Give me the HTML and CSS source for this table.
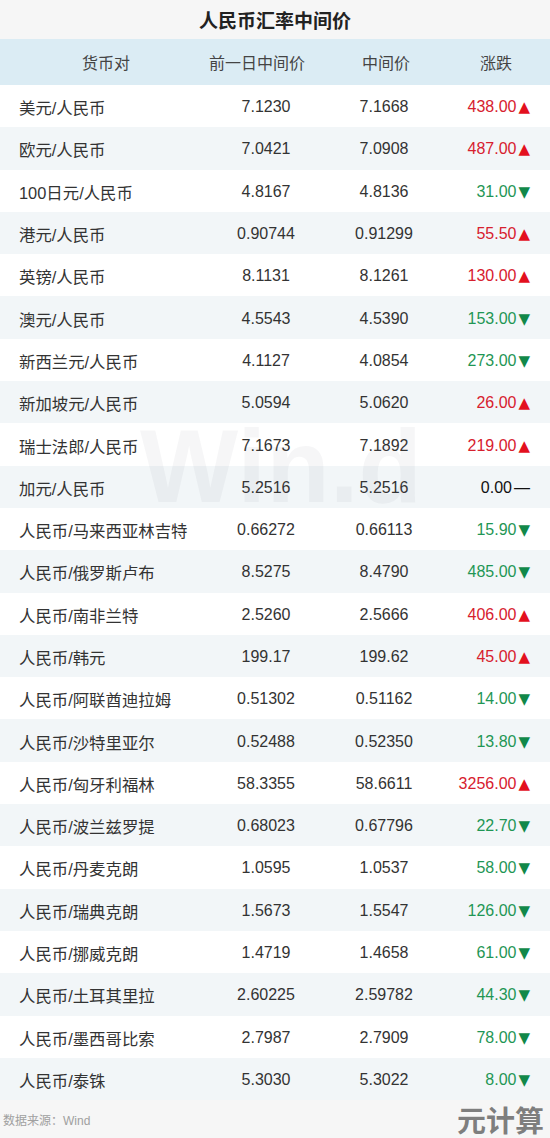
FILE: index.html
```html
<!DOCTYPE html>
<html lang="zh">
<head>
<meta charset="utf-8">
<title>人民币汇率中间价</title>
<link rel="stylesheet" href="styles.css">
</head>
<body>
<div class="page">
  <div class="title">人民币汇率中间价</div>
  <div class="head">
    <div class="hc">货币对</div>
    <div class="hc">前一日中间价</div>
    <div class="hc">中间价</div>
    <div class="hc">涨跌</div>
  </div>
  <div class="rows">
    <div class="row"><div class="c1">美元/人民币</div><div class="c2">7.1230</div><div class="c3">7.1668</div><div class="c4 up">438.00<span class="tri">▲</span></div></div>
    <div class="row"><div class="c1">欧元/人民币</div><div class="c2">7.0421</div><div class="c3">7.0908</div><div class="c4 up">487.00<span class="tri">▲</span></div></div>
    <div class="row"><div class="c1">100日元/人民币</div><div class="c2">4.8167</div><div class="c3">4.8136</div><div class="c4 down">31.00<span class="tri">▼</span></div></div>
    <div class="row"><div class="c1">港元/人民币</div><div class="c2">0.90744</div><div class="c3">0.91299</div><div class="c4 up">55.50<span class="tri">▲</span></div></div>
    <div class="row"><div class="c1">英镑/人民币</div><div class="c2">8.1131</div><div class="c3">8.1261</div><div class="c4 up">130.00<span class="tri">▲</span></div></div>
    <div class="row"><div class="c1">澳元/人民币</div><div class="c2">4.5543</div><div class="c3">4.5390</div><div class="c4 down">153.00<span class="tri">▼</span></div></div>
    <div class="row"><div class="c1">新西兰元/人民币</div><div class="c2">4.1127</div><div class="c3">4.0854</div><div class="c4 down">273.00<span class="tri">▼</span></div></div>
    <div class="row"><div class="c1">新加坡元/人民币</div><div class="c2">5.0594</div><div class="c3">5.0620</div><div class="c4 up">26.00<span class="tri">▲</span></div></div>
    <div class="row"><div class="c1">瑞士法郎/人民币</div><div class="c2">7.1673</div><div class="c3">7.1892</div><div class="c4 up">219.00<span class="tri">▲</span></div></div>
    <div class="row"><div class="c1">加元/人民币</div><div class="c2">5.2516</div><div class="c3">5.2516</div><div class="c4 flat">0.00<span class="dash">—</span></div></div>
    <div class="row"><div class="c1">人民币/马来西亚林吉特</div><div class="c2">0.66272</div><div class="c3">0.66113</div><div class="c4 down">15.90<span class="tri">▼</span></div></div>
    <div class="row"><div class="c1">人民币/俄罗斯卢布</div><div class="c2">8.5275</div><div class="c3">8.4790</div><div class="c4 down">485.00<span class="tri">▼</span></div></div>
    <div class="row"><div class="c1">人民币/南非兰特</div><div class="c2">2.5260</div><div class="c3">2.5666</div><div class="c4 up">406.00<span class="tri">▲</span></div></div>
    <div class="row"><div class="c1">人民币/韩元</div><div class="c2">199.17</div><div class="c3">199.62</div><div class="c4 up">45.00<span class="tri">▲</span></div></div>
    <div class="row"><div class="c1">人民币/阿联酋迪拉姆</div><div class="c2">0.51302</div><div class="c3">0.51162</div><div class="c4 down">14.00<span class="tri">▼</span></div></div>
    <div class="row"><div class="c1">人民币/沙特里亚尔</div><div class="c2">0.52488</div><div class="c3">0.52350</div><div class="c4 down">13.80<span class="tri">▼</span></div></div>
    <div class="row"><div class="c1">人民币/匈牙利福林</div><div class="c2">58.3355</div><div class="c3">58.6611</div><div class="c4 up">3256.00<span class="tri">▲</span></div></div>
    <div class="row"><div class="c1">人民币/波兰兹罗提</div><div class="c2">0.68023</div><div class="c3">0.67796</div><div class="c4 down">22.70<span class="tri">▼</span></div></div>
    <div class="row"><div class="c1">人民币/丹麦克朗</div><div class="c2">1.0595</div><div class="c3">1.0537</div><div class="c4 down">58.00<span class="tri">▼</span></div></div>
    <div class="row"><div class="c1">人民币/瑞典克朗</div><div class="c2">1.5673</div><div class="c3">1.5547</div><div class="c4 down">126.00<span class="tri">▼</span></div></div>
    <div class="row"><div class="c1">人民币/挪威克朗</div><div class="c2">1.4719</div><div class="c3">1.4658</div><div class="c4 down">61.00<span class="tri">▼</span></div></div>
    <div class="row"><div class="c1">人民币/土耳其里拉</div><div class="c2">2.60225</div><div class="c3">2.59782</div><div class="c4 down">44.30<span class="tri">▼</span></div></div>
    <div class="row"><div class="c1">人民币/墨西哥比索</div><div class="c2">2.7987</div><div class="c3">2.7909</div><div class="c4 down">78.00<span class="tri">▼</span></div></div>
    <div class="row"><div class="c1">人民币/泰铢</div><div class="c2">5.3030</div><div class="c3">5.3022</div><div class="c4 down">8.00<span class="tri">▼</span></div></div>
  </div>
  <div class="foot">
    <div class="src">数据来源：Wind</div>
    <div class="brand">元计算</div>
  </div>
  <div class="wm">Win.d</div>
</div>
</body>
</html>
```
FILE: styles.css
```css
html, body {
  margin: 0;
  padding: 0;
  background: #f6f6f6;
}
.page {
  position: relative;
  width: 550px;
  height: 1138px;
  overflow: hidden;
  font-family: "Liberation Sans", "Noto Sans CJK SC", sans-serif;
  color: #333;
}
.title {
  height: 39px;
  display: flex;
  align-items: center;
  justify-content: center;
  font-size: 19px;
  font-weight: bold;
  color: #222;
  background: #f6f6f6;
}
.head {
  height: 46px;
  display: grid;
  grid-template-columns: 212px 90px 168px 52px 28px;
  align-items: center;
  background: #dbecf4;
  font-size: 16px;
  color: #444;
}
.hc {
  display: flex;
  justify-content: center;
  white-space: nowrap;
}
.rows {
  display: flex;
  flex-direction: column;
}
.row {
  height: 42.3px;
  display: grid;
  grid-template-columns: 210px 112px 124px 1fr;
  align-items: center;
  font-size: 16px;
  background: #ffffff;
  padding-top: 2px;
  box-sizing: border-box;
}
.row:nth-child(even) {
  background: #f2f6f8;
}
.c1 {
  padding-left: 19px;
  white-space: nowrap;
  font-size: 16.4px;
  color: #333;
}
.c2, .c3 {
  text-align: center;
  color: #333;
}
.c4 {
  display: flex;
  justify-content: flex-end;
  align-items: center;
  padding-right: 20px;
}
.up { color: #d7202e; }
.down { color: #1f9655; }
.flat { color: #111; }
.tri {
  font-family: "DejaVu Sans", sans-serif;
  font-size: 15px;
  margin-left: 2px;
}
.up .tri { color: #e3101e; }
.down .tri { color: #11884a; }
.dash {
  margin-left: 2px;
  color: #111;
}
.foot {
  height: 38px;
  display: flex;
  justify-content: space-between;
  align-items: center;
  background: #f6f6f6;
}
.src {
  padding-left: 3px;
  font-size: 12px;
  color: #a0a0a0;
}
.brand {
  padding-right: 6px;
  font-size: 29px;
  font-weight: bold;
  color: rgba(80, 80, 80, 0.72);
}
.wm {
  position: absolute;
  left: 140px;
  top: 414px;
  font-family: "Liberation Sans", sans-serif;
  font-size: 104px;
  font-weight: bold;
  color: rgba(100, 110, 120, 0.06);
  pointer-events: none;
  line-height: 1;
}
```
